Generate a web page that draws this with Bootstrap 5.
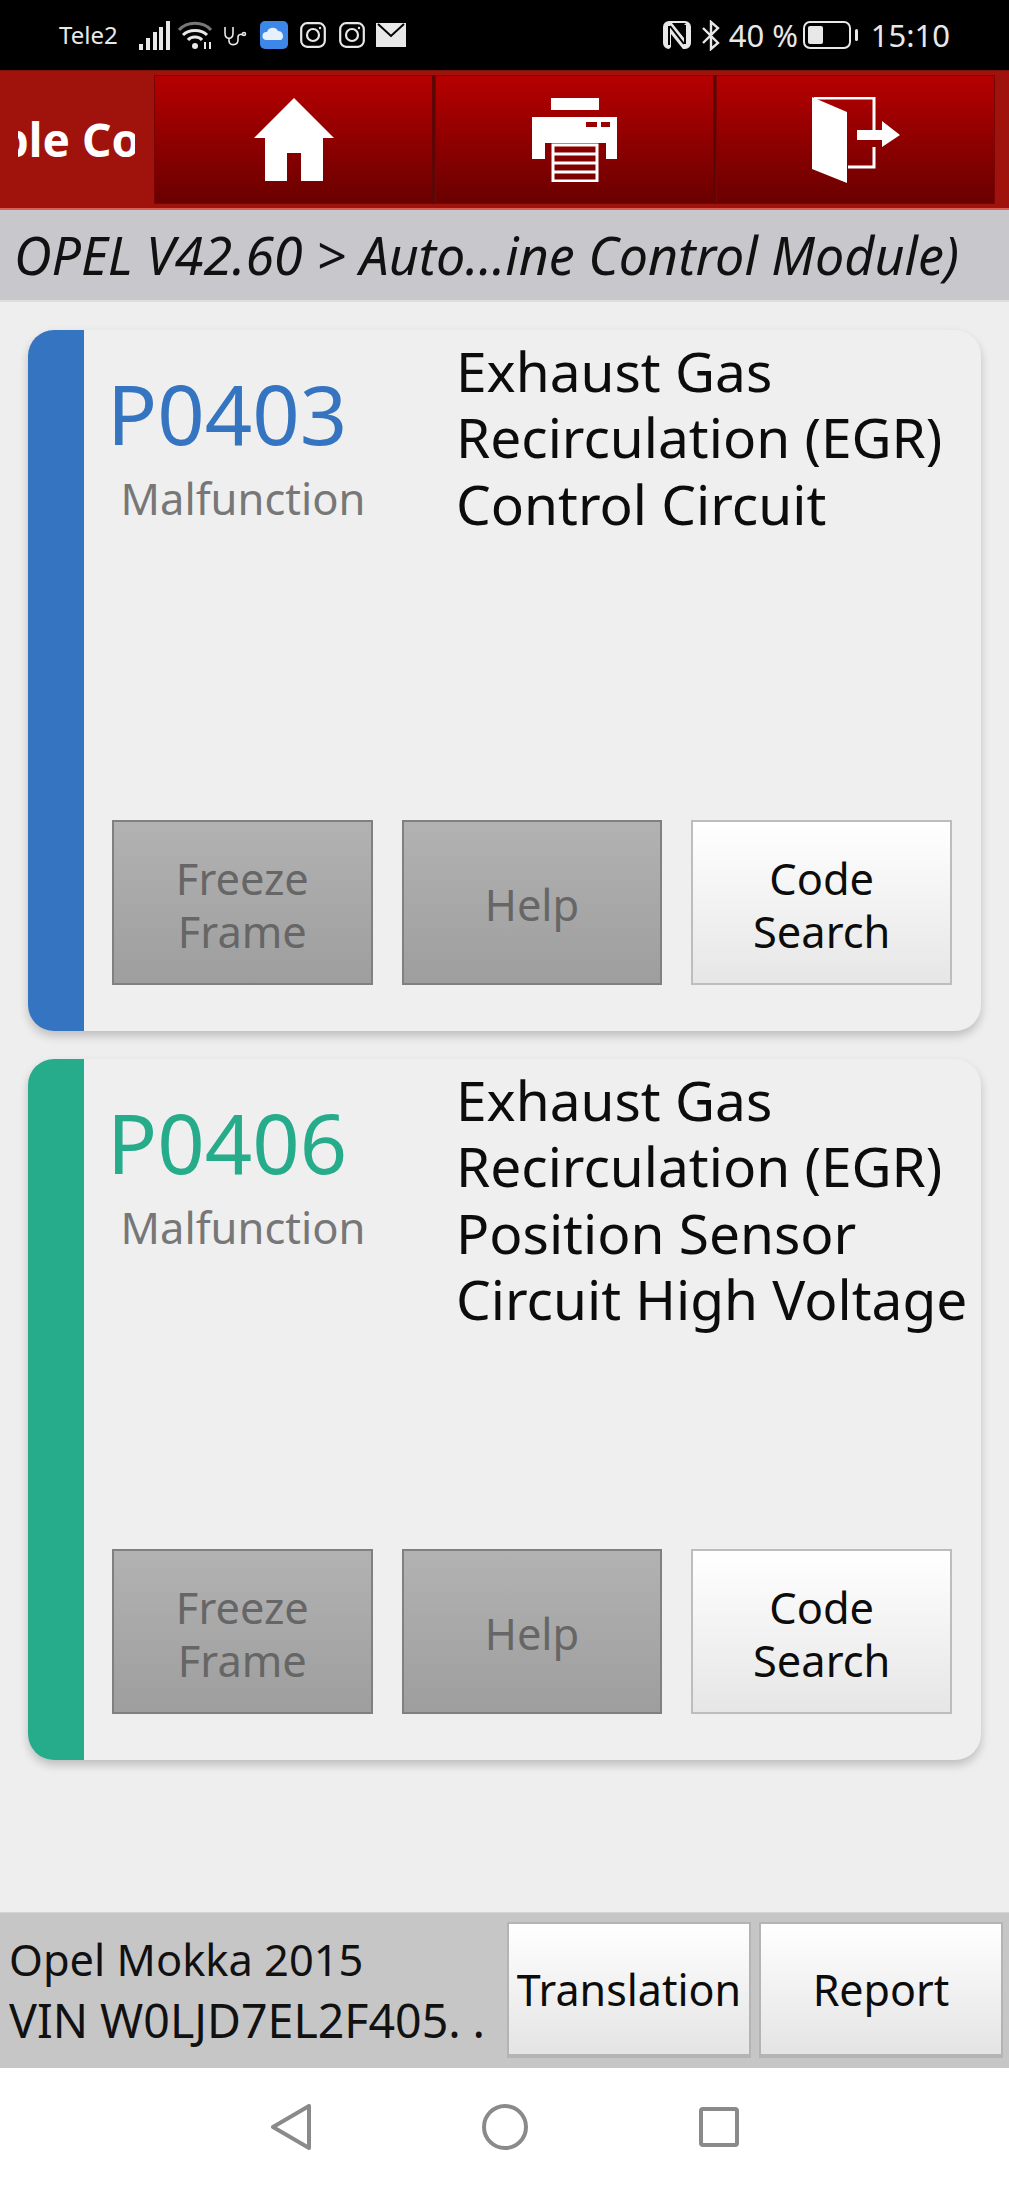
<!DOCTYPE html>
<html lang="en">
<head>
    <meta charset="UTF-8">
    <meta name="viewport" content="width=device-width, initial-scale=1.0">
    <title>Trouble Codes</title>
    <link href="https://cdn.jsdelivr.net/npm/bootstrap@5.3.3/dist/css/bootstrap.min.css" rel="stylesheet">
    <style>
        body { background: #000; font-family: "Noto Sans", "Liberation Sans", sans-serif; overflow: hidden; }
        .app-shell { width: 1009px; height: 2186px; background: #eeeeee; }

        .status-bar { height: 70px; background: #000; color: #e8e8e8; padding: 0 59px; font-size: 24px; }
        .status-right { font-size: 31px; }
        .status-bar svg { display: block; flex: none; }

        .top-bar { height: 140px; background: #a0130c; border-top: 1px solid #7c0f0a; border-bottom: 2px solid #d8605a; padding: 4px 14px 4px 0; }
        .title-pad { width: 154px; padding: 0 19px 0 18px; flex: none; }
        .title-clip { width: 117px; }
        /* marquee text: the app catches it part way through */
        .title-clip span { color: #fff; font-weight: 700; font-size: 46px; white-space: nowrap; flex: none; margin-right: 36px; }
        .top-btn { flex: 1 1 0; background: linear-gradient(#b60000, #6a0000); border: 1px solid #7a0404; border-right: 3px solid #5e0505; padding: 0; }
        .top-btn:last-child { border-right: 1px solid #7a0404; }

        .crumb { height: 92px; background: #c8c8cc; color: #111; font-size: 52px; font-style: italic; padding-left: 14px; white-space: nowrap; border-bottom: 2px solid #ddd; }

        .code-list { padding: 28px 28px 0 28px; gap: 28px; }
        .code-card { height: 701px; background: #efefef; border-radius: 26px; box-shadow: 0 5px 10px rgba(0,0,0,.2); overflow: hidden; }
        .side-blue { background: #3574c0; }
        .side-green { background: #26ab8b; }
        .side-strip { width: 56px; flex: none; }
        .code-body { padding: 0 29px 46px 28px; min-width: 0; }
        .code-col { width: 346px; flex: none; padding-top: 30px; }
        .code-num { font-size: 83px; line-height: 106px; margin-left: -5px; }
        .txt-blue { color: #3574c0; }
        .txt-green { color: #26ab8b; }
        .code-state { font-size: 43.5px; line-height: 64px; color: #777; width: 262px; text-align: center; }
        .code-desc { font-size: 55px; line-height: 66.4px; color: #0c0c0c; padding-top: 8px; margin-left: -2px; white-space: nowrap; }

        .btn-row { gap: 29px; }
        .act-btn { flex: 1 1 0; height: 165px; font-size: 43.4px; line-height: 53px; border-radius: 0; padding: 4px 10px 0; }
        .act-on { background: linear-gradient(#ffffff, #e6e6e6); border: 2px solid #bdbdbd; color: #0c0c0c; }
        .act-off { background: linear-gradient(#b2b2b2, #9e9e9e); border: 2px solid #808080; color: #666; }

        .foot-bar { height: 156px; background: #c6c6c6; padding: 9px 6px 10px 9px; border-top: 1px solid #d4d4d4; }
        .vin-text { font-size: 43.4px; line-height: 60px; color: #111; width: 499px; white-space: nowrap; }
        .vin-line { font-size: 46.5px; }
        .vin-dots { letter-spacing: .25em; }
        .foot-btn { width: 244px; flex: none; background: linear-gradient(#ffffff, #e4e4e4); border: 2px solid #b4b4b4; border-bottom-width: 4px; border-radius: 0; color: #0c0c0c; font-size: 43px; padding: 3px 0 0; }

        .nav-bar { height: 118px; background: #fff; }
        .nav-slot { width: 214px; }
    </style>
</head>
<body>
    <div class="app-shell d-flex flex-column">

        <div class="status-bar d-flex align-items-center">
            <span style="width:80px">Tele2</span>
            <svg width="31" height="29" viewBox="0 0 31 29" fill="#e8e8e8"><rect x="0" y="23" width="4" height="6"/><rect x="7" y="17" width="4" height="12"/><rect x="14" y="11" width="4" height="18"/><rect x="20" y="6" width="4" height="23"/><rect x="27" y="0" width="4" height="29"/></svg>
            <svg class="ms-2" width="34" height="29" viewBox="0 0 34 29" fill="none" stroke="#e8e8e8" stroke-width="3"><path d="M1 9C9 0 25 0 33 9" stroke="#777"/><path d="M5 14C11 8 23 8 29 14"/><path d="M10 19C13 15 21 15 24 19"/><circle cx="17" cy="25" r="3" fill="#e8e8e8" stroke="none"/><path d="M27 21v7M32 21v7" stroke-width="2"/></svg>
            <svg style="margin-left:11px" width="24" height="21" viewBox="0 0 24 21" fill="none" stroke="#e8e8e8" stroke-width="1.6"><path d="M2 2v6c0 7 8 7 8 0V2"/><path d="M6 13v3c0 5 9 5 9-1v-3c0-3 4-3 5-2"/><circle cx="21" cy="9" r="1.5"/></svg>
            <svg style="margin-left:13px" width="28" height="28" viewBox="0 0 28 28"><rect width="28" height="28" rx="5" fill="#3d87e8"/><path d="M6 19a4 4 0 0 1 1-8 6 6 0 0 1 11-1 5 5 0 0 1 3 9z" fill="#e6f1fd"/></svg>
            <svg style="margin-left:12px" width="26" height="26" viewBox="0 0 26 26" fill="none" stroke="#e8e8e8" stroke-width="2.2"><rect x="1.2" y="1.2" width="23.6" height="23.6" rx="6"/><circle cx="13" cy="13" r="6"/><circle cx="20" cy="6" r="1.2" fill="#e8e8e8" stroke="none"/></svg>
            <svg style="margin-left:13px" width="26" height="26" viewBox="0 0 26 26" fill="none" stroke="#e8e8e8" stroke-width="2.2"><rect x="1.2" y="1.2" width="23.6" height="23.6" rx="6"/><circle cx="13" cy="13" r="6"/><circle cx="20" cy="6" r="1.2" fill="#e8e8e8" stroke="none"/></svg>
            <svg style="margin-left:11px" width="30" height="24" viewBox="0 0 30 24"><rect width="30" height="24" fill="#e8e8e8"/><path d="M2 1l13 12L28 1" fill="none" stroke="#000" stroke-width="2"/></svg>

            <div class="status-right ms-auto d-flex align-items-center">
                <svg width="28" height="28" viewBox="0 0 28 28"><path fill-rule="evenodd" fill="#e8e8e8" d="M6 0H22a6 6 0 0 1 6 6V22a6 6 0 0 1-6 6H20L8 13V26L6 28A6 6 0 0 1 0 22V6A6 6 0 0 1 6 0ZM9 2L21 17V4L23 2 20 2Z"/><path d="M6 5V24M22 4V23M7 5L21 23" fill="none" stroke="#000" stroke-width="2"/></svg>
                <svg style="margin-left:10px" width="20" height="31" viewBox="0 0 20 31" fill="none" stroke="#e8e8e8" stroke-width="2.4"><path d="M2 8l15 15-7 6V2l7 6L2 23"/></svg>
                <span style="margin-left:8px;width:74px">40 %</span>
                <svg width="56" height="28" viewBox="0 0 56 28" fill="none"><rect x="1" y="1" width="46" height="26" rx="6" stroke="#e8e8e8" stroke-width="2"/><rect x="5" y="5" width="15" height="18" rx="2" fill="#e8e8e8"/><rect x="52" y="8" width="3" height="12" rx="1.5" fill="#e8e8e8"/></svg>
                <span style="margin-left:12px">15:10</span>
            </div>
        </div>

        <div class="top-bar d-flex">
            <div class="title-pad d-flex">
                <div class="title-clip d-flex align-items-center justify-content-center overflow-hidden">
                    <span>Trouble Codes</span>
                </div>
            </div>
            <button class="top-btn d-flex align-items-center justify-content-center" type="button" aria-label="Home">
                <svg width="80" height="83" viewBox="0 0 80 83" fill="#fff"><path d="M40 0L80 40H69V83H47V55H33V83H11V40H0z"/></svg>
            </button>
            <button class="top-btn d-flex align-items-center justify-content-center" type="button" aria-label="Print">
                <svg width="86" height="84" viewBox="0 0 86 84" fill="#fff"><rect x="19" y="0" width="48" height="12"/><path fill-rule="evenodd" d="M0 19H85V61H74V45H13V61H0zM54 24v5h11v-5zM69 24v5h9v-5z"/><path d="M21 47H65V83H21zM21 56H65M21 65H65M21 74H65" fill="none" stroke="#fff" stroke-width="3"/></svg>
            </button>
            <button class="top-btn d-flex align-items-center justify-content-center" type="button" aria-label="Exit">
                <svg width="88" height="86" viewBox="0 0 88 86" fill="none"><path d="M2 1H62V34M62 50V70H36" stroke="#fff" stroke-width="3"/><path d="M0 0L35 15V86L0 72z" fill="#fff"/><path d="M45 33H70V24L88 38 70 50V43H45z" fill="#fff"/></svg>
            </button>
        </div>

        <div class="crumb d-flex align-items-center overflow-hidden">OPEL V42.60 &gt; Auto...ine Control Module)</div>

        <div class="code-list d-flex flex-column flex-grow-1">
            <div class="code-card d-flex">
                <div class="side-strip side-blue"></div>
                <div class="code-body d-flex flex-column flex-grow-1">
                    <div class="d-flex flex-grow-1">
                        <div class="code-col">
                            <div class="code-num txt-blue">P0403</div>
                            <div class="code-state">Malfunction</div>
                        </div>
                        <div class="code-desc">Exhaust Gas<br>Recirculation (EGR)<br>Control Circuit</div>
                    </div>
                    <div class="btn-row d-flex">
                        <button class="btn act-btn act-off" type="button">Freeze Frame</button>
                        <button class="btn act-btn act-off" type="button">Help</button>
                        <button class="btn act-btn act-on" type="button">Code Search</button>
                    </div>
                </div>
            </div>

            <div class="code-card d-flex">
                <div class="side-strip side-green"></div>
                <div class="code-body d-flex flex-column flex-grow-1">
                    <div class="d-flex flex-grow-1">
                        <div class="code-col">
                            <div class="code-num txt-green">P0406</div>
                            <div class="code-state">Malfunction</div>
                        </div>
                        <div class="code-desc">Exhaust Gas<br>Recirculation (EGR)<br>Position Sensor<br>Circuit High Voltage</div>
                    </div>
                    <div class="btn-row d-flex">
                        <button class="btn act-btn act-off" type="button">Freeze Frame</button>
                        <button class="btn act-btn act-off" type="button">Help</button>
                        <button class="btn act-btn act-on" type="button">Code Search</button>
                    </div>
                </div>
            </div>
        </div>

        <div class="foot-bar d-flex gap-2">
            <div class="vin-text d-flex flex-column justify-content-center overflow-hidden">
                <div>Opel Mokka 2015</div>
                <div class="vin-line">VIN W0LJD7EL2F405<span class="vin-dots">..</span></div>
            </div>
            <button class="btn foot-btn" type="button">Translation</button>
            <button class="btn foot-btn" type="button">Report</button>
        </div>

        <div class="nav-bar d-flex align-items-center justify-content-center">
            <div class="nav-slot d-flex justify-content-center">
                <svg width="42" height="46" viewBox="0 0 42 46" fill="none" stroke="#8a8a8a" stroke-width="4" stroke-linejoin="round"><path d="M39 2V44L3 23z"/></svg>
            </div>
            <div class="nav-slot d-flex justify-content-center">
                <svg width="46" height="46" viewBox="0 0 46 46" fill="none" stroke="#8a8a8a" stroke-width="4"><circle cx="23" cy="23" r="21"/></svg>
            </div>
            <div class="nav-slot d-flex justify-content-center">
                <svg width="40" height="40" viewBox="0 0 40 40" fill="none" stroke="#8a8a8a" stroke-width="4" stroke-linejoin="round"><rect x="2" y="2" width="36" height="36" rx="2"/></svg>
            </div>
        </div>
    </div>

    <script src="https://cdn.jsdelivr.net/npm/bootstrap@5.3.3/dist/js/bootstrap.bundle.min.js"></script>
</body>
</html>
